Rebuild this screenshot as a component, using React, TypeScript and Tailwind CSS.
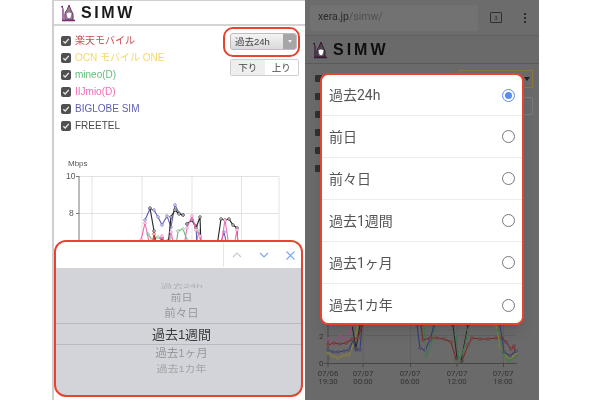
import React from "react";

const jp = { fontFamily: '"Liberation Sans","Noto Sans CJK JP",sans-serif' };

const Logo = ({ c, g }: { c: string; g: string }) => (
  <svg width="16" height="18" viewBox="0 0 16 18" className="shrink-0">
    <path d="M2 2 L3 5 M1 3 L3 2" fill="none" stroke={c} strokeWidth="1" />
    <path d="M3 5 L3 16" fill="none" stroke={c} strokeWidth="1.3" />
    <path d="M5 16 Q4 8 7 6 L9 1 L11 6 Q14 9 13 16 Z" fill={g} stroke={c} strokeWidth="1" />
    <path d="M6 9 Q9 7 12 9 Q12 14 9 15 Q6 14 6 9 Z" fill="#fff" stroke={c} strokeWidth="0.6" />
    <path d="M2 16.500 H15" stroke={c} strokeWidth="1.6" />
  </svg>
);

const Check = () => (
  <span className="flex h-[10px] w-[10px] shrink-0 items-center justify-center rounded-[2px] bg-[#505050]">
    <svg width="8" height="8" viewBox="0 0 8 8">
      <path d="M1.3 4.2 L3.2 6 L6.8 1.8" fill="none" stroke="#e8e8e8" strokeWidth="1.3" />
    </svg>
  </span>
);

const carriers: [string, string][] = [
  ["楽天モバイル", "text-[#c9504f]"],
  ["OCN モバイル ONE", "text-[#f7d56a]"],
  ["mineo(D)", "text-[#67bb7c]"],
  ["IIJmio(D)", "text-[#f06cb8]"],
  ["BIGLOBE SIM", "text-[#5e5eb0]"],
  ["FREETEL", "text-[#484848]"],
];

type P = [number, number][];
const Series = ({ pts, c, f = "#fff" }: { pts: P; c: string; f?: string }) => (
  <g>
    <polyline points={pts.map((p) => p.join(",")).join(" ")} fill="none" stroke={c} strokeWidth="1.1" />
    {pts.map((p, i) => (
      <circle key={i} cx={p[0]} cy={p[1]} r="1.3" fill={f} stroke={c} strokeWidth="0.7" />
    ))}
  </g>
);

const LeftChart = () => (
  <svg width="251" height="106" viewBox="54 140 251 106" className="mt-[7px] block" style={{ fontFamily: "Liberation Sans" }}>
    <text x="68" y="166" fontSize="8" fill="#555">Mbps</text>
    <text x="66" y="179" fontSize="8.500" fill="#555">10</text>
    <text x="69" y="216" fontSize="8.500" fill="#555">8</text>
    <g stroke="#dcdcdc" strokeWidth="0.8">
      <path d="M79 176.5H279M79 213.5H279M92 176V246M142 176V246M192 176V246M241.500 176V246M279 176V246" />
    </g>
    <path d="M79 176V246M76 176.500H79M76 213.500H79" stroke="#777" strokeWidth="1" />
    <Series c="#67bb7c" pts={[[148, 234], [152, 240], [158, 237], [164, 242], [170, 238]]} />
    <Series c="#67bb7c" pts={[[176, 246], [178, 231], [183, 229], [187, 240]]} />
    <Series c="#67bb7c" pts={[[196, 244], [199, 231], [201, 246]]} />
    <Series c="#5e5eb0" pts={[[145, 220], [150, 209], [154, 210], [158, 217], [162, 225], [167, 216], [171, 227], [175, 205], [179, 213], [183, 215]]} />
    <Series c="#5e5eb0" pts={[[187, 224], [192, 220], [196, 226], [197, 246]]} />
    <Series c="#5e5eb0" pts={[[220, 246], [224, 232], [227, 246]]} />
    <Series c="#222" pts={[[150, 208], [154, 231], [156, 246]]} />
    <Series c="#222" pts={[[162, 246], [162, 238], [166, 246]]} />
    <Series c="#222" pts={[[168, 246], [171, 217], [175, 210], [179, 214], [183, 215]]} />
    <Series c="#222" pts={[[187, 224], [192, 220], [196, 228], [200, 217], [201, 246]]} />
    <Series c="#222" pts={[[217, 246], [221, 219], [225, 220], [229, 219], [233, 225], [237, 228], [238, 246]]} />
    <Series c="#f06cb8" pts={[[141, 240], [145, 223], [150, 246]]} />
    <Series c="#f06cb8" pts={[[158, 246], [162, 236], [165, 246]]} />
    <Series c="#f06cb8" pts={[[168, 246], [171, 232], [174, 246]]} />
    <Series c="#f06cb8" pts={[[184, 246], [187, 228], [192, 216], [196, 230], [200, 236], [202, 246]]} />
    <Series c="#f06cb8" pts={[[221, 246], [225, 220], [229, 246]]} />
    <Series c="#f06cb8" pts={[[234, 246], [237, 230], [238, 246]]} />
    <Series c="#e03030" pts={[[152, 246], [154, 234], [156, 246]]} />
  </svg>
);

const Picker = () => (
  <div className="absolute bottom-[3px] left-0 right-[2px] overflow-hidden rounded-[12px] border-2 border-[#e8432e] bg-[#d2d4d9]" style={jp}>
    <div className="flex h-[26px] items-center justify-end bg-white">
      <div className="flex h-[24px] w-[78px] items-center gap-[15px] border-l border-[#e6e6e6] pl-[7px]">
        <svg width="12" height="8" viewBox="0 0 12 8"><path d="M2 6 L6 2 L10 6" fill="none" stroke="#c8c8c8" strokeWidth="1.1" /></svg>
        <svg width="12" height="8" viewBox="0 0 12 8"><path d="M2 2 L6 6 L10 2" fill="none" stroke="#7ba7f0" strokeWidth="1.2" /></svg>
        <svg width="11" height="11" viewBox="0 0 11 11"><path d="M1.500 1.500 L9.500 9.500 M9.500 1.500 L1.500 9.500" fill="none" stroke="#7ba7f0" strokeWidth="1.1" /></svg>
      </div>
    </div>
    <div className="flex h-[127px] flex-col items-center">
      <div className="mt-[13px] flex h-[11px] items-center pl-[6px] text-[11.500px] leading-none text-[#aeb0b4] scale-y-[0.45]">過去24h</div>
      <div className="flex h-[13px] items-center pl-[6px] text-[11px] leading-none text-[#96989c] scale-y-[0.85]">前日</div>
      <div className="flex h-[18px] items-center pl-[6px] text-[11.500px] leading-none text-[#96989c]">前々日</div>
      <div className="flex h-[22px] w-full items-center justify-center border-y border-[#b9bbc0] pl-[6px] text-[13px] leading-none text-[#3a3a3a]">過去1週間</div>
      <div className="flex h-[17px] items-center pl-[6px] text-[11.500px] leading-none text-[#96989c]">過去1ヶ月</div>
      <div className="flex h-[15px] items-center pl-[6px] text-[11px] leading-none text-[#a2a4a8] scale-y-[0.85]">過去1カ年</div>
    </div>
  </div>
);

const LeftPhone = () => (
  <div className="relative h-[400px] w-[253px] shrink-0 border-t border-l-2 border-[#cfcfcf] bg-white" style={jp}>
    <div className="flex h-[25px] items-center gap-[5px] border-b-2 border-[#d4d4d4] pl-[6px]">
      <Logo c="#7a2f74" g="#8a8a8a" />
      <span className="text-[16px] font-bold leading-none tracking-[2.6px] text-[#1a1a1a]" style={{ fontFamily: "Liberation Sans" }}>SIMW</span>
    </div>
    <div className="flex items-start justify-between pr-[5px]">
      <ul className="flex flex-col gap-[3px] pl-[7px] pt-[8px]">
        {carriers.map(([t, c]) => (
          <li key={t} className={`flex h-[14px] items-center gap-[4px] text-[10px] leading-none ${c}`}>
            <Check />
            <span>{t}</span>
          </li>
        ))}
      </ul>
      <div className="relative mr-[1px] mt-[7px] flex w-[69px] flex-col items-center gap-[9px]">
        <div className="flex h-[17px] w-[67px] -translate-x-px items-center justify-between overflow-hidden rounded-[3px] border border-[#bdbdbd] bg-gradient-to-b from-[#f4f4f4] to-[#d9d9d9] text-[9.500px] leading-none text-[#444]">
          <span className="pl-[4px]">過去24h</span>
          <span className="flex h-full w-[13px] items-center justify-center bg-[#a6a6a6]">
            <svg width="4" height="3" viewBox="0 0 4 3"><path d="M0 0H4L2 3Z" fill="#eee" /></svg>
          </span>
        </div>
        <div className="flex h-[17px] w-[69px] overflow-hidden rounded-[2px] border border-[#cfcfcf] text-[9.500px] leading-none text-[#444]">
          <span className="flex flex-1 items-center justify-center bg-[#eeeeee]">下り</span>
          <span className="flex flex-1 items-center justify-center bg-white">上り</span>
        </div>
        <div className="absolute -left-[7px] -top-[6px] h-[30px] w-[77px] rounded-[10px] border-2 border-[#e8432e]" />
      </div>
    </div>
    <LeftChart />
    <Picker />
  </div>
);

const RightChart = () => (
  <svg width="234" height="76" viewBox="305 324 234 76" className="block" style={{ fontFamily: '"Roboto",sans-serif' }}>
    <path d="M328 335.500H516M328 363.500H516M363 324V363M410.500 324V363M457 324V363M503.500 324V363" stroke="#5f5f5f" strokeWidth="0.8" />
    <path d="M328 324V367M324 363.500H517M363 363V367M410.500 363V367M457 363V367M503.500 363V367" stroke="#3f3f3f" strokeWidth="0.8" fill="none" />
    <text x="319" y="338.500" fontSize="8" fill="#333">2</text>
    <text x="319" y="366" fontSize="8" fill="#333">0</text>
    <Series f="#6a6a6a" c="#8a8336" pts={[[328, 353], [333, 356], [338, 358], [344, 355], [349, 355], [355, 340], [358, 325]]} />
    <Series f="#6a6a6a" c="#3a3a74" pts={[[328, 350], [333, 352], [338, 352], [344, 351], [349, 350], [353, 340], [356, 350], [360, 350], [362, 325]]} />
    <Series f="#6a6a6a" c="#2a2a2a" pts={[[352, 325], [356, 348], [360, 325]]} />
    <Series f="#6a6a6a" c="#a04a7c" pts={[[328, 339], [334, 344], [340, 336], [345, 340], [350, 332], [352, 325]]} />
    <Series f="#6a6a6a" c="#7c2a2a" pts={[[328, 345], [334, 343], [340, 344], [346, 343], [352, 339], [358, 338], [362, 325]]} />
    <Series f="#6a6a6a" c="#3a3a74" pts={[[417, 325], [420, 348], [425, 350], [430, 340], [434, 325]]} />
    <Series f="#6a6a6a" c="#3f7a4c" pts={[[424, 325], [426, 356], [431, 345], [436, 325]]} />
    <Series f="#6a6a6a" c="#7c2a2a" pts={[[421, 325], [423, 340], [430, 338], [437, 338], [444, 339], [451, 342], [456, 359], [462, 361], [468, 345], [472, 338], [480, 339], [488, 339], [496, 338], [502, 338], [506, 342], [511, 349], [514, 346], [516, 355]]} />
    <Series f="#6a6a6a" c="#2a2a2a" pts={[[453, 325], [457, 358], [461, 361], [468, 325]]} />
    <Series f="#6a6a6a" c="#3f7a4c" pts={[[456, 335], [459, 360], [464, 350], [468, 330]]} />
    <Series f="#6a6a6a" c="#8a8336" pts={[[496, 325], [500, 345], [505, 356], [510, 359], [516, 354]]} />
    <Series f="#6a6a6a" c="#3f7a4c" pts={[[498, 330], [503, 355], [509, 361], [516, 357]]} />
    <Series f="#6a6a6a" c="#3a3a74" pts={[[500, 325], [504, 352], [510, 356], [516, 351]]} />
    <g fontSize="7.800" fill="#333" textAnchor="middle">
      <text x="328" y="375.500">07/06</text><text x="328" y="384">19:30</text>
      <text x="363" y="375.500">07/07</text><text x="363" y="384">00:00</text>
      <text x="410" y="375.500">07/07</text><text x="410" y="384">06:00</text>
      <text x="457" y="375.500">07/07</text><text x="457" y="384">12:00</text>
      <text x="503" y="375.500">07/07</text><text x="503" y="384">18:00</text>
    </g>
  </svg>
);

const options = ["過去24h", "前日", "前々日", "過去1週間", "過去1ヶ月", "過去1カ年"];

const Dialog = () => (
  <div className="absolute left-[15px] top-[73px] h-[252px] w-[204px] overflow-hidden rounded-[8px] border-2 border-[#e8432e] bg-white shadow-lg" style={{ fontFamily: '"Roboto","Noto Sans CJK JP",sans-serif' }}>
    {options.map((o, i) => (
      <div key={o} className={`flex items-center justify-between pl-[7px] pr-[7px] ${i === 0 ? "h-[41px]" : "h-[42px]"} ${i < 5 ? "border-b border-[#ececec]" : ""}`}>
        <span className="text-[14px] leading-none text-[#555]">{o}</span>
        {i === 0 ? (
          <span className="flex h-[13px] w-[13px] items-center justify-center rounded-full border-[1.5px] border-[#5b8def]">
            <span className="h-[7px] w-[7px] rounded-full bg-[#5b8def]" />
          </span>
        ) : (
          <span className="h-[13px] w-[13px] rounded-full border-[1.5px] border-[#777]" />
        )}
      </div>
    ))}
  </div>
);

const RightPhone = () => (
  <div className="relative flex h-[400px] w-[234px] shrink-0 flex-col bg-[#6a6a6a]" style={{ fontFamily: '"Roboto","Noto Sans CJK JP",sans-serif' }}>
    <div className="flex h-[36px] items-center border-b border-[#5f5f5f] bg-[#6c6c6c] pl-[5px] pr-[13px]">
      <div className="flex h-[26px] w-[168px] items-center rounded-[2px] bg-[#727272] pl-[8px] text-[10.500px] leading-none text-[#2b2b2b]">
        xera.jp<span className="text-[#505050]">/simw/</span>
      </div>
      <div className="ml-[12px] flex h-[11px] w-[12px] items-center justify-center rounded-[1px] border border-[#2f2f2f] text-[6px] leading-none text-[#2f2f2f]">3</div>
      <div className="ml-auto flex flex-col gap-[2px]">
        <span className="h-[2px] w-[2px] bg-[#2a2a2a]" />
        <span className="h-[2px] w-[2px] bg-[#2a2a2a]" />
        <span className="h-[2px] w-[2px] bg-[#2a2a2a]" />
      </div>
    </div>
    <div className="flex h-[28px] items-center gap-[5px] border-b border-[#5a5a5a] pl-[7px]">
      <Logo c="#3a1a38" g="#4a4a4a" />
      <span className="text-[16px] font-bold leading-none tracking-[3px] text-[#0e0e0e]" style={{ fontFamily: "Liberation Sans" }}>SIMW</span>
    </div>
    <div className="flex flex-1 items-start justify-between pr-[6px] pt-[6px]">
      <div className="flex flex-col gap-[11px] pl-[10px] pt-[5px]">
        {[0, 1, 2, 3, 4, 5].map((i) => (
          <span key={i} className="h-[7px] w-[7px] rounded-[1px] bg-[#303030]" />
        ))}
      </div>
      <div className="flex flex-col items-end gap-[9px]">
        <div className="flex h-[18px] w-[75px] items-center justify-end rounded-[1px] border border-[#8a7740] pr-[2px]">
          <svg width="6" height="4" viewBox="0 0 6 4"><path d="M0 0H6L3 4Z" fill="#222" /></svg>
        </div>
        <div className="h-[18px] w-[75px] rounded-[1px] border border-[#7a7a7a]" />
      </div>
    </div>
    <RightChart />
    <Dialog />
  </div>
);

export default function App() {
  return (
    <div className="flex h-[400px] w-[600px] overflow-hidden bg-white pl-[52px] blur-[0.35px]">
      <LeftPhone />
      <RightPhone />
    </div>
  );
}
